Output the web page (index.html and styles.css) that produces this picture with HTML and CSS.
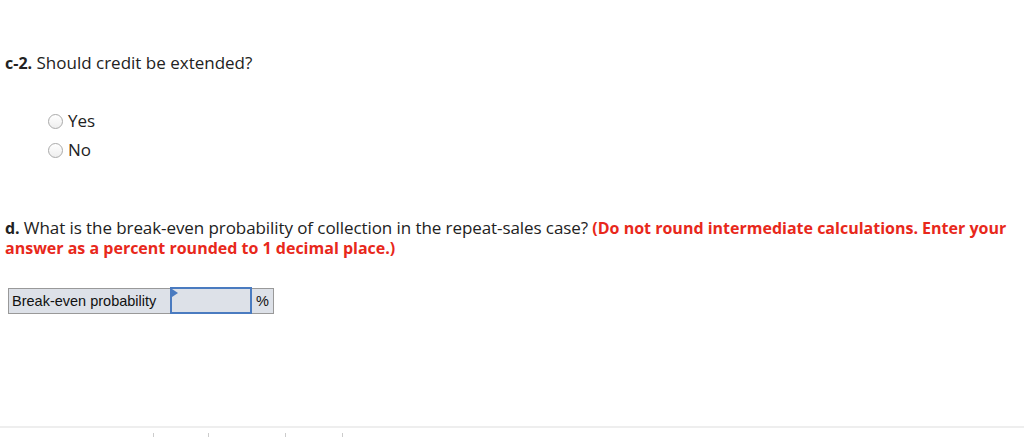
FILE: index.html
```html
<!DOCTYPE html>
<html>
<head>
<meta charset="utf-8">
<link rel="stylesheet" href="styles.css">
</head>
<body>
<div class="page">
  <p class="q q-c2"><b>c-2.</b> Should credit be extended?</p>
  <div class="options">
    <label class="opt"><span class="radio"></span>Yes</label>
    <label class="opt"><span class="radio"></span>No</label>
  </div>
  <p class="q q-d"><b>d.</b> What is the break-even probability of collection in the repeat-sales case? <span class="hint">(Do not round intermediate calculations. Enter your answer as a percent rounded to 1 decimal place.)</span></p>
  <table class="answer">
    <tr>
      <td class="lbl">Break-even probability</td>
      <td class="inp"><span class="flag"></span></td>
      <td class="unit">%</td>
    </tr>
  </table>
</div>
<div class="footer">
  <span class="tick t1"></span><span class="tick t2"></span><span class="tick t3"></span><span class="tick t4"></span>
</div>
</body>
</html>
```
FILE: styles.css
```css
html, body { margin: 0; padding: 0; background: #fff; }
body { width: 1024px; height: 437px; overflow: hidden; font-family: "Open Sans", "Liberation Sans", sans-serif; color: #222; }
.page { padding: 0 5px; height: 426px; }
.q { margin: 0; font-size: 17px; line-height: 20px; }
.q b { font-weight: 700; font-size: 16px; }
.q-c2 { padding-top: 53px; }
.options { padding: 38px 0 0 43px; display: flex; flex-direction: column; gap: 9px; }
.opt { display: flex; align-items: center; font-size: 17px; line-height: 20px; }
.radio { width: 15px; height: 15px; border: 1px solid #aaa; border-radius: 50%; box-sizing: border-box; margin-right: 5px; background: linear-gradient(#fff, #eee); }
.q-d { padding-top: 58px; letter-spacing: -0.08px; }
.hint { color: #e8281b; font-weight: 700; font-size: 16px; letter-spacing: 0; }
.answer { margin: 29px 0 0 3px; border-collapse: collapse; table-layout: fixed; font-family: "Liberation Sans", Arial, sans-serif; font-size: 14.5px; color: #111; }
.answer td { border: 1px solid #999; background: #dde1e8; height: 23px; padding: 0; }
.lbl { width: 158px; padding-left: 3px !important; }
.inp { width: 78px; border: 2px solid #4a7bc0 !important; position: relative; }
.flag { position: absolute; left: 0; top: 0; width: 0; height: 0; border-left: 6px solid #4a7bc0; border-top: 4px solid transparent; border-bottom: 4px solid transparent; }
.unit { width: 21px; text-align: center; }
.footer { border-top: 2px solid #eee; height: 9px; position: relative; }
.tick { position: absolute; top: 5px; width: 1px; height: 4px; background: #ccc; }
.t1 { left: 153px; } .t2 { left: 208px; } .t3 { left: 285px; } .t4 { left: 342px; }
```
